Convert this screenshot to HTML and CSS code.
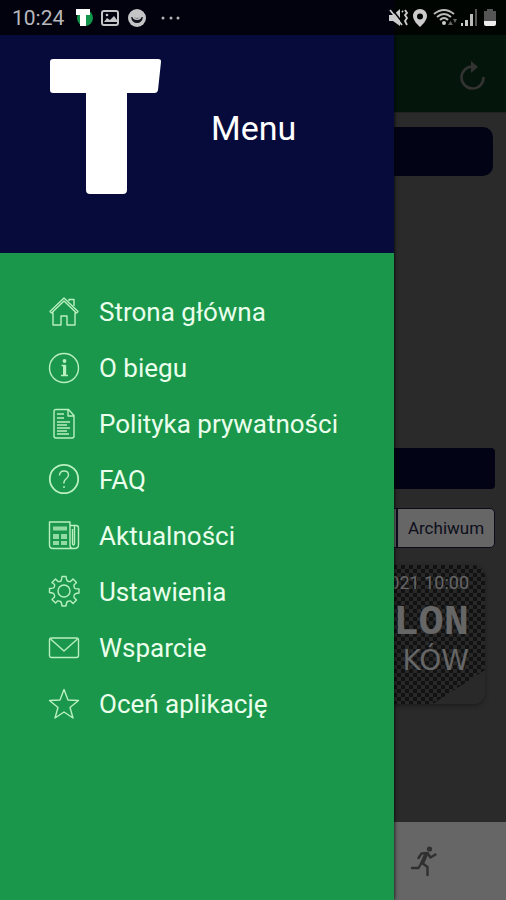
FILE: index.html
```html
<!DOCTYPE html>
<html lang="pl">
<head>
<meta charset="utf-8">
<meta name="viewport" content="width=device-width, initial-scale=1">
<title>Menu</title>
<link rel="stylesheet" href="styles.css">
</head>
<body>
<div class="app">
  <div class="page">
    <header class="topbar">
      <button class="icon-button" type="button" aria-label="Odśwież">
        <svg width="28" height="32" viewBox="0 0 28 32" fill="none" stroke="#333331" stroke-width="2.6"><path d="M15 6.500A11 11 0 1 0 25.500 17"/><path d="M13 1v12l7-6z" fill="#333331" stroke="none"/></svg>
      </button>
    </header>
    <main class="content">
      <div class="banner"></div>
      <div class="section-bar"></div>
      <div class="tabs">
        <span class="tab"></span>
        <button class="tab" type="button">Archiwum</button>
      </div>
      <article class="card">
        <p class="card-date">-2021 10:00</p>
        <p class="card-name">LON</p>
        <p class="card-city">KÓW</p>
      </article>
    </main>
    <nav class="bottombar">
      <button class="icon-button" type="button" aria-label="Bieg">
        <svg width="28" height="32" viewBox="0 0 28 32" fill="none" stroke="#303030" stroke-width="2.400" stroke-linecap="round" stroke-linejoin="round"><circle cx="19.500" cy="4" r="2.600" fill="#303030" stroke="none"/><path d="M8.500 13l3-4.500 6-.5 3 4.500 5-3M16.500 9l-4.500 9 5.500 4v8M12 17l-3.500 6H2"/><path d="M16 9.500l-3.500 8" stroke-width="4"/></svg>
      </button>
    </nav>
  </div>

  <aside class="drawer">
    <header class="drawer-head">
      <svg class="logo" width="114" height="140" viewBox="0 0 114 140" fill="#fff" role="img" aria-label="Logo"><path d="M4 1H109Q112.500 1 112 4L109 32Q108.500 35 105.500 35H78V132Q78 136 74 136H41Q37 136 37 132V35H4Q1 35 1 32V4Q1 1 4 1Z"/></svg>
      <h1 class="title">Menu</h1>
    </header>
    <nav class="menu">
      <a class="menu-item" href="#home">
        <svg class="icon" viewBox="0 0 32 32"><path d="M2 15.500L16 2l14 13.500-1.500 1.500L16 5 3.500 17zM5 16.500V29h8V20h6v9h8V16.500M21 5V3.500h5V10"/></svg>
        <span>Strona główna</span></a>
      <a class="menu-item" href="#about">
        <svg class="icon" viewBox="0 0 32 32"><circle cx="16" cy="16" r="14.500"/><circle class="solid" cx="16.500" cy="9" r="1.900"/><path d="M13.500 13.500h4V23M13 23.500h7"/><path class="bold" d="M16.500 14v9"/></svg>
        <span>O biegu</span></a>
      <a class="menu-item" href="#privacy">
        <svg class="icon" viewBox="0 0 32 32"><path d="M8 1.500h12.500L26 7.500V28q0 2-2 2H8q-2 0-2-2V3.500q0-2 2-2zM20 2v6h6M9 6h7M9 10h7M9 14h13M9 17h10M9 20h13M9 23h10M9 26h12"/></svg>
        <span>Polityka prywatności</span></a>
      <a class="menu-item" href="#faq">
        <svg class="icon" viewBox="0 0 32 32"><circle cx="16" cy="15" r="14.200" stroke-width="1.800"/><path d="M11.500 11.500q0-4.500 4.500-4.500t4.500 4q0 2-2.500 4t-2 4.500M16 22v2"/></svg>
        <span>FAQ</span></a>
      <a class="menu-item" href="#news">
        <svg class="icon" viewBox="0 0 32 32"><path d="M1.500 2H22v23q0 3.500 3 3.500H5q-3.500 0-3.500-3.500zM22 5.500h6q2.500 0 2.500 2.500v16.500q0 4-4 4H24M24.500 9v14q0 2 1 2t1-2V5.500"/><path class="solid" d="M5 6.500h14v4H5zM5 14h6v5H5zM13 14h6v5h-6zM5 21h6v4H5zM13 21h6v4h-6z" opacity=".75"/></svg>
        <span>Aktualności</span></a>
      <a class="menu-item" href="#settings">
        <svg class="icon" viewBox="0 0 32 32"><path d="M14 .5h4q.5 4 1.500 4.500 2 1 3 .5l2.500-2.500 3.500 3.500-2.500 2.500q-.5 1 .5 3 .5 1 4.500 1v4q-4 .5-4.500 1.500-1 2-.5 3l2.500 2.500-3.500 3.500-2.500-2.500q-1-.5-3 .5-1 .5-1.500 4.500h-4q-.5-4-1.500-4.500-2-1-3-.5L7.500 27 4 23.500 6.500 21q.5-1-.5-3-.5-1-4.500-1.500v-4q4 0 4.500-1 1-2 .5-3L4 6.500 7.500 3 10 5.500q1 .5 3-.5 .5-.5 1-4.500z"/><circle cx="16" cy="15" r="6"/></svg>
        <span>Ustawienia</span></a>
      <a class="menu-item" href="#support">
        <svg class="icon" viewBox="0 0 32 32"><rect x="1.500" y="6" width="29" height="19.500" rx="2"/><path d="M2.500 7L16 19 29.500 7"/></svg>
        <span>Wsparcie</span></a>
      <a class="menu-item" href="#rate">
        <svg class="icon" viewBox="0 0 32 32"><path d="M16 1.500l4 10.500 10.500.5-8.500 7 3 10.500-9-6-9 6 3-10.500-8.500-7L12 12z"/></svg>
        <span>Oceń aplikację</span></a>
    </nav>
  </aside>

  <div class="statusbar">
    <div class="status-group">
      <span class="clock">10:24</span>
      <svg width="110" height="20" viewBox="0 0 110 20">
        <circle cx="9" cy="10" r="8" fill="#11954a"/><path d="M0 1h14v6h-4v11H4V7H0z" fill="#fff"/>
        <rect x="26" y="3" width="16" height="14" rx="2" fill="none" stroke="#c5c5c8" stroke-width="2"/><path d="M28 14l3-4 3 2 4-4 3 4v2z" fill="#c5c5c8"/><circle cx="31" cy="7" r="1.300" fill="#c5c5c8"/>
        <circle cx="61" cy="10" r="9" fill="#c5c5c8"/><path d="M55 9q6 2 12 0-1 6-6 6t-6-6z" fill="#10121c"/><path d="M57 8.500q4 4 8 0v2q-4 3-8 0z" fill="#c5c5c8"/>
        <g fill="#b5b5b8"><circle cx="87" cy="10" r="1.500"/><circle cx="95" cy="10" r="1.500"/><circle cx="102" cy="10" r="1.500"/></g>
      </svg>
    </div>
    <svg width="110" height="20" viewBox="0 0 110 20" fill="#ccc">
      <path d="M1 7h4l7-6v17l-7-5H1z"/><path d="M4 1l10 13" stroke="#010404" stroke-width="1.500"/><path d="M2 2l12 15M14 3l1 1M17 2l2 3-2 2 2 3-2 3 2 4" fill="none" stroke="#ccc" stroke-width="1.800"/>
      <path d="M32 1c-4 0-7 3-7 7 0 5 7 11 7 11s7-6 7-11c0-4-3-7-7-7zm0 4.500a3 3 0 1 1 0 6 3 3 0 0 1 0-6z" fill-rule="evenodd"/>
      <g fill="none" stroke="#bbb" stroke-width="2"><path d="M46 6q10-8 20 0M49 9q7-6 14 0M52 12q4-4 8 0"/></g><circle cx="56" cy="15" r="2"/><path d="M60 17l2.500-4 2.500 4zM65 11l2 4 2-4z" fill="#666"/>
      <path d="M73 15h2v3h-2zM77 12h3v6h-3z"/><path d="M82 6h3v12h-3z" fill="#bbb"/><path d="M87 1h2v17h-2z" fill="#555"/>
      <path d="M96 3h3V1h6v2h3v10H96z" fill="#555"/><path d="M96 13h12v3q0 2-2 2h-8q-2 0-2-2z" fill="#eee"/>
    </svg>
  </div>
</div>
</body>
</html>
```
FILE: styles.css
```css
* {
  box-sizing: border-box;
}

body {
  margin: 0;
  font-family: Roboto, "Liberation Sans", sans-serif;
  background: #2a2a2a;
}

h1,
p {
  margin: 0;
}

button {
  border: 0;
  padding: 0;
  background: none;
  font: inherit;
}

svg {
  display: block;
  overflow: visible;
}

.app {
  position: relative;
  min-height: 100vh;
  overflow: hidden;
}

/* Screen behind the drawer */
.page {
  display: flex;
  flex-direction: column;
  min-height: 100vh;
}

.topbar {
  display: flex;
  justify-content: flex-end;
  padding: 60px 20px 20px;
  background: #04150b;
  border-bottom: 1px solid #222;
}

.content {
  flex: 1;
  display: flex;
  flex-direction: column;
  padding: 14px 11px 0;
}

.banner {
  height: 49px;
  margin: 0 2px 272px;
  border-radius: 10px;
  background: #020416;
}

.section-bar {
  height: 41px;
  margin-bottom: 19px;
  border-radius: 4px;
  background: #020416;
}

.tabs {
  display: grid;
  grid-template-columns: 1fr 98px;
  height: 40px;
  margin-bottom: 17px;
  border: 1px solid #0a0c1c;
  border-radius: 5px;
  background: #666;
  overflow: hidden;
}

.tab {
  color: #0d0e1b;
  font-size: 17px;
}

.tab + .tab {
  border-left: 2px solid #0a0c1c;
}

.card {
  height: 139px;
  margin: 0 10px;
  padding: 6px 16px;
  border-radius: 12px;
  text-align: right;
  color: #666;
  background:
    linear-gradient(327deg, #292929 28px, transparent 29px),
    repeating-conic-gradient(#121212 0 25%, #282828 0 50%) 0 0 / 8px 8px;
  box-shadow: 0 2px 4px #1c1c1c;
}

.card-date {
  font-size: 18px;
  line-height: 24px;
}

.card-name {
  font: bold 42px/56px "Liberation Mono", monospace;
}

.card-city {
  font: 28px/20px "DejaVu Sans", sans-serif;
}

.bottombar {
  display: flex;
  justify-content: flex-end;
  padding: 23px 68px;
  background: #666;
}

/* Drawer */
.drawer {
  position: absolute;
  inset: 0 112px 0 0;
  background: #1b974b;
  box-shadow: 0 0 4px #000;
}

.drawer-head {
  display: flex;
  align-items: center;
  gap: 48px;
  height: 253px;
  padding: 2px 49px 0;
  background: #060b3b;
}

.title {
  color: #fff;
  font-size: 34px;
  font-weight: 400;
}

.menu {
  display: flex;
  flex-direction: column;
  padding: 31px 48px;
}

.menu-item {
  display: flex;
  align-items: center;
  gap: 19px;
  height: 56px;
  color: #eaffec;
  font-size: 26px;
  white-space: nowrap;
  text-decoration: none;
}

.icon {
  flex: none;
  width: 32px;
  height: 32px;
  fill: none;
  stroke: #b9f0bf;
  stroke-width: 1.4;
  stroke-linejoin: round;
}

.icon .solid {
  fill: #b9f0bf;
  stroke: none;
}

.icon .bold {
  stroke-width: 3;
}

/* System status bar */
.statusbar {
  position: absolute;
  inset: 0 0 auto;
  display: flex;
  align-items: center;
  justify-content: space-between;
  height: 35px;
  padding: 0 8px 0 12px;
  background: rgba(0, 0, 0, 0.75);
}

.status-group {
  display: flex;
  align-items: center;
  gap: 12px;
}

.clock {
  color: #b8b8bc;
  font-size: 21px;
}
```
